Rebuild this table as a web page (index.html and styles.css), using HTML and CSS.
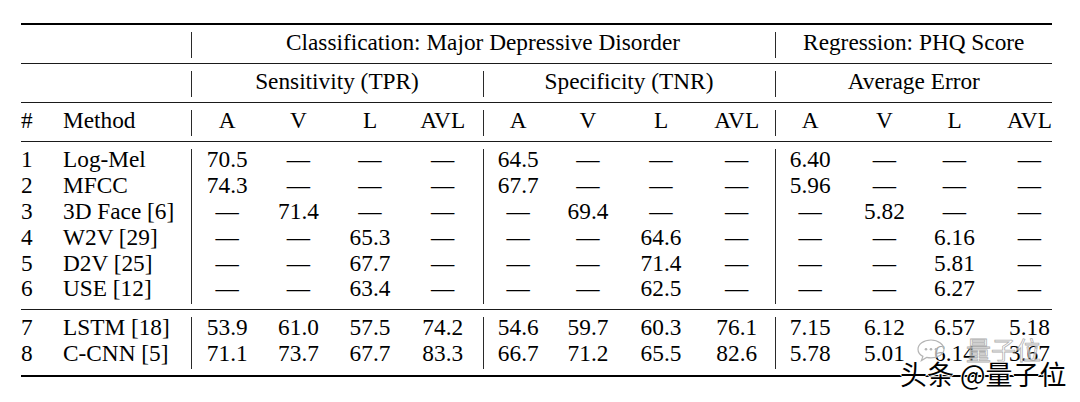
FILE: index.html
```html
<!DOCTYPE html>
<html lang="en">
<head>
<meta charset="utf-8">
<title>Results table</title>
<link rel="stylesheet" href="styles.css">
</head>
<body>
<table class="results">
  <colgroup>
    <col><col><col><col><col><col><col><col><col><col><col><col><col><col>
  </colgroup>
  <tbody>
    <tr class="rule top"><td colspan="14"><div class="line"></div></td></tr>
    <tr>
      <td colspan="2"></td>
      <td colspan="8" class="sep">Classification: Major Depressive Disorder</td>
      <td colspan="4" class="sep">Regression: PHQ Score</td>
    </tr>
    <tr class="rule"><td colspan="14"><div class="line"></div></td></tr>
    <tr>
      <td colspan="2"></td>
      <td colspan="4" class="sep">Sensitivity (TPR)</td>
      <td colspan="4" class="sep">Specificity (TNR)</td>
      <td colspan="4" class="sep">Average Error</td>
    </tr>
    <tr class="rule"><td colspan="14"><div class="line"></div></td></tr>
    <tr class="cols">
      <td class="l">#</td><td class="l">Method</td>
      <td class="sep">A</td><td>V</td><td>L</td><td>AVL</td>
      <td class="sep">A</td><td>V</td><td>L</td><td>AVL</td>
      <td class="sep">A</td><td>V</td><td>L</td><td>AVL</td>
    </tr>
    <tr class="rule"><td colspan="14"><div class="line"></div></td></tr>
    <tr class="cols">
      <td class="l">1</td><td class="l">Log-Mel</td>
      <td class="sep">70.5</td><td>—</td><td>—</td><td>—</td>
      <td class="sep">64.5</td><td>—</td><td>—</td><td>—</td>
      <td class="sep">6.40</td><td>—</td><td>—</td><td>—</td>
    </tr>
    <tr class="cols">
      <td class="l">2</td><td class="l">MFCC</td>
      <td class="sep">74.3</td><td>—</td><td>—</td><td>—</td>
      <td class="sep">67.7</td><td>—</td><td>—</td><td>—</td>
      <td class="sep">5.96</td><td>—</td><td>—</td><td>—</td>
    </tr>
    <tr class="cols">
      <td class="l">3</td><td class="l">3D Face [6]</td>
      <td class="sep">—</td><td>71.4</td><td>—</td><td>—</td>
      <td class="sep">—</td><td>69.4</td><td>—</td><td>—</td>
      <td class="sep">—</td><td>5.82</td><td>—</td><td>—</td>
    </tr>
    <tr class="cols">
      <td class="l">4</td><td class="l">W2V [29]</td>
      <td class="sep">—</td><td>—</td><td>65.3</td><td>—</td>
      <td class="sep">—</td><td>—</td><td>64.6</td><td>—</td>
      <td class="sep">—</td><td>—</td><td>6.16</td><td>—</td>
    </tr>
    <tr class="cols">
      <td class="l">5</td><td class="l">D2V [25]</td>
      <td class="sep">—</td><td>—</td><td>67.7</td><td>—</td>
      <td class="sep">—</td><td>—</td><td>71.4</td><td>—</td>
      <td class="sep">—</td><td>—</td><td>5.81</td><td>—</td>
    </tr>
    <tr class="cols">
      <td class="l">6</td><td class="l">USE [12]</td>
      <td class="sep">—</td><td>—</td><td>63.4</td><td>—</td>
      <td class="sep">—</td><td>—</td><td>62.5</td><td>—</td>
      <td class="sep">—</td><td>—</td><td>6.27</td><td>—</td>
    </tr>
    <tr class="rule"><td colspan="14"><div class="line"></div></td></tr>
    <tr class="cols">
      <td class="l">7</td><td class="l">LSTM [18]</td>
      <td class="sep">53.9</td><td>61.0</td><td>57.5</td><td>74.2</td>
      <td class="sep">54.6</td><td>59.7</td><td>60.3</td><td>76.1</td>
      <td class="sep">7.15</td><td>6.12</td><td>6.57</td><td>5.18</td>
    </tr>
    <tr class="cols">
      <td class="l">8</td><td class="l">C-CNN [5]</td>
      <td class="sep">71.1</td><td>73.7</td><td>67.7</td><td>83.3</td>
      <td class="sep">66.7</td><td>71.2</td><td>65.5</td><td>82.6</td>
      <td class="sep">5.78</td><td>5.01</td><td>6.14</td><td>3.67</td>
    </tr>
    <tr class="rule bottom"><td colspan="14"><div class="line"></div></td></tr>
  </tbody>
</table>

<div class="wm-faint">
  <svg class="wm-bubble" width="30" height="24" viewBox="0 0 30 24" aria-hidden="true">
    <path d="M15 2C7.5 2 2 6.3 2 11.2c0 3 1.9 5.6 4.9 7.2L5.4 22.5l5.2-3.1c1.4.3 2.9.5 4.4.5 7.5 0 13-4.3 13-8.7S22.5 2 15 2z" fill="rgba(255,255,255,0.65)" stroke="#b4b4b4" stroke-width="1.2"/>
    <circle cx="10" cy="11.2" r="1.3" fill="#b4b4b4"/>
    <circle cx="15" cy="11.2" r="1.3" fill="#b4b4b4"/>
    <circle cx="20" cy="11.2" r="1.3" fill="#b4b4b4"/>
  </svg>
  <span class="wm-faint-text">量子位</span>
</div>
<div class="wm">头条 @量子位</div>
</body>
</html>
```

FILE: styles.css
```css
html, body {
  margin: 0;
  background: #fff;
}

body {
  position: relative;
  width: 1080px;
  height: 402px;
  overflow: hidden;
  font-family: "Liberation Serif", "Times New Roman", serif;
  color: #000;
}

.results {
  margin: 23px 0 0 21px;
  width: 1031px;
  table-layout: fixed;
  border-collapse: collapse;
  border-spacing: 0;
  font-size: 23.3px;
}

.results col:nth-child(1) { width: 42px; }
.results col:nth-child(2) { width: 128px; }
.results col:nth-child(3) { width: 72px; }
.results col:nth-child(4) { width: 71px; }
.results col:nth-child(5) { width: 72px; }
.results col:nth-child(6) { width: 77px; }
.results col:nth-child(7) { width: 70px; }
.results col:nth-child(8) { width: 70px; }
.results col:nth-child(9) { width: 76px; }
.results col:nth-child(10) { width: 76px; }
.results col:nth-child(11) { width: 70px; }
.results col:nth-child(12) { width: 79px; }
.results col:nth-child(13) { width: 61px; }
.results col:nth-child(14) { width: 67px; }

.results td {
  padding: 0 0 4.4px;
  line-height: 21.4px;
  text-align: center;
  white-space: nowrap;
}

.results td.l {
  text-align: left;
}

.results td.sep {
  border-left: 1px solid #2a2a2a;
}

.results .cols td:nth-child(6) {
  padding-right: 3px;
}

.results .cols td:nth-child(14) {
  padding-left: 22px;
}

.results .rule td {
  padding: 4.6px 0 7.2px;
  line-height: 0;
}

.results .rule.top td {
  padding-top: 0;
}

.results .rule.bottom td {
  padding: 5.6px 0 0;
}

.line {
  height: 1.5px;
  background: #1a1a1a;
}

.rule.top .line,
.rule.bottom .line {
  height: 2px;
  background: #000;
}

.wm-faint {
  position: absolute;
  left: 916px;
  top: 337px;
  display: flex;
  align-items: center;
  gap: 20px;
}

.wm-faint-text {
  font-family: "Noto Sans CJK SC", sans-serif;
  font-size: 25px;
  line-height: 1;
  color: rgba(255, 255, 255, 0.7);
  -webkit-text-stroke: 0.8px rgba(160, 160, 160, 0.85);
}

.wm {
  position: absolute;
  left: 900px;
  top: 360px;
  font-family: "Noto Sans CJK SC", sans-serif;
  font-size: 27px;
  line-height: 1;
  color: #000;
  text-shadow: 1px 0 #fff, -1px 0 #fff, 0 1px #fff, 0 -1px #fff;
  white-space: nowrap;
}
```
